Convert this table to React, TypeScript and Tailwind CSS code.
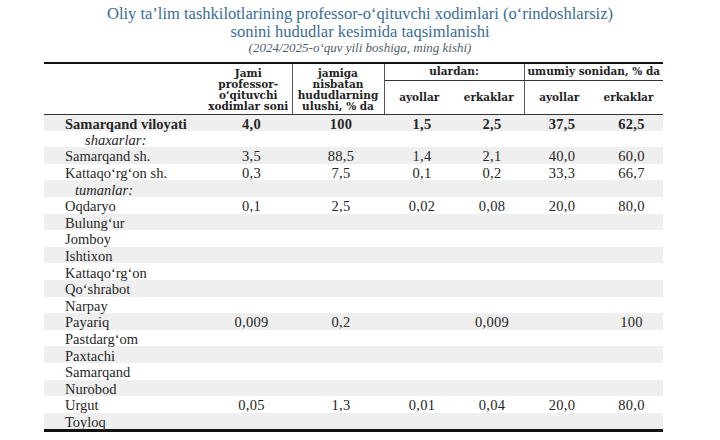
import React from "react";

type Row = { label: string; kind: "bold" | "ital1" | "ital2" | "normal"; v: string[] };

const rows: Row[] = [
  { label: "Samarqand viloyati", kind: "bold", v: ["4,0", "100", "1,5", "2,5", "37,5", "62,5"] },
  { label: "shaxarlar:", kind: "ital1", v: ["", "", "", "", "", ""] },
  { label: "Samarqand sh.", kind: "normal", v: ["3,5", "88,5", "1,4", "2,1", "40,0", "60,0"] },
  { label: "Kattaqo‘rg‘on sh.", kind: "normal", v: ["0,3", "7,5", "0,1", "0,2", "33,3", "66,7"] },
  { label: "tumanlar:", kind: "ital2", v: ["", "", "", "", "", ""] },
  { label: "Oqdaryo", kind: "normal", v: ["0,1", "2,5", "0,02", "0,08", "20,0", "80,0"] },
  { label: "Bulung‘ur", kind: "normal", v: ["", "", "", "", "", ""] },
  { label: "Jomboy", kind: "normal", v: ["", "", "", "", "", ""] },
  { label: "Ishtixon", kind: "normal", v: ["", "", "", "", "", ""] },
  { label: "Kattaqo‘rg‘on", kind: "normal", v: ["", "", "", "", "", ""] },
  { label: "Qo‘shrabot", kind: "normal", v: ["", "", "", "", "", ""] },
  { label: "Narpay", kind: "normal", v: ["", "", "", "", "", ""] },
  { label: "Payariq", kind: "normal", v: ["0,009", "0,2", "", "0,009", "", "100"] },
  { label: "Pastdarg‘om", kind: "normal", v: ["", "", "", "", "", ""] },
  { label: "Paxtachi", kind: "normal", v: ["", "", "", "", "", ""] },
  { label: "Samarqand", kind: "normal", v: ["", "", "", "", "", ""] },
  { label: "Nurobod", kind: "normal", v: ["", "", "", "", "", ""] },
  { label: "Urgut", kind: "normal", v: ["0,05", "1,3", "0,01", "0,04", "20,0", "80,0"] },
  { label: "Toyloq", kind: "normal", v: ["", "", "", "", "", ""] },
];

const hdr = "font-['DejaVu_Serif',serif] font-bold text-[10.5px] leading-[11px] text-[#222] text-center align-middle";

export default function App() {
  return (
    <div className="w-[720px] h-[440px] bg-white overflow-hidden font-['Liberation_Serif',serif]">
      <div className="pt-[5px] text-center">
        <div className="text-[16.5px] leading-[18px] text-[#3a6c96]">
          Oliy ta’lim tashkilotlarining professor-o‘qituvchi xodimlari (o‘rindoshlarsiz)
        </div>
        <div className="text-[16.5px] leading-[18px] text-[#3a6c96]">
          sonini hududlar kesimida taqsimlanishi
        </div>
        <div className="text-[13px] leading-[14px] italic text-[#4f5d6b]">
          (2024/2025-o‘quv yili boshiga, ming kishi)
        </div>
      </div>
      <div className="pl-[44px] pt-[7px]">
        <table className="w-[619px] table-fixed border-collapse">
          <colgroup>
            <col className="w-[161px]" />
            <col className="w-[87px]" />
            <col className="w-[92px]" />
            <col className="w-[70px]" />
            <col className="w-[70px]" />
            <col className="w-[70px]" />
            <col className="w-[69px]" />
          </colgroup>
          <thead>
            <tr className="border-t-2 border-t-[#111]">
              <th rowSpan={2} className="border-b border-b-[#333]"></th>
              <th rowSpan={2} className={`${hdr} pt-[2px] border-b border-b-[#333]`}>
                Jami<br />professor-<br />o‘qituvchi<br />xodimlar soni
              </th>
              <th rowSpan={2} className={`${hdr} pt-[2px] border-x border-x-[#555] border-b border-b-[#333]`}>
                jamiga<br />nisbatan<br />hududlarning<br />ulushi, % da
              </th>
              <th colSpan={2} className={`${hdr} h-[17px] border-r border-r-[#555] border-b border-b-[#333]`}>
                ulardan:
              </th>
              <th colSpan={2} className={`${hdr} h-[17px] border-b border-b-[#333] whitespace-nowrap`}>
                umumiy sonidan, % da
              </th>
            </tr>
            <tr className="h-[34px]">
              <th className={`${hdr} border-b border-b-[#333]`}>ayollar</th>
              <th className={`${hdr} border-r border-r-[#555] border-b border-b-[#333]`}>erkaklar</th>
              <th className={`${hdr} border-b border-b-[#333]`}>ayollar</th>
              <th className={`${hdr} border-b border-b-[#333]`}>erkaklar</th>
            </tr>
          </thead>
          <tbody className="border-b-[3px] border-b-[#111]">
            {rows.map((r, i) => {
              const bg = i % 2 === 0 ? "bg-[#efefef]" : "bg-white";
              const bold = r.kind === "bold";
              const labelCls =
                r.kind === "bold"
                  ? "pl-[21px] font-bold"
                  : r.kind === "ital1"
                  ? "pl-[41px] italic"
                  : r.kind === "ital2"
                  ? "pl-[31px] italic"
                  : "pl-[21px]";
              return (
                <tr key={i} className={`${bg} h-[16.6px]`}>
                  <td className={`${labelCls} text-[14.5px] leading-[14px] pt-[2px] pb-0 pr-0 text-[#262626] whitespace-nowrap align-middle`}>
                    {r.label}
                  </td>
                  {r.v.map((v, j) => (
                    <td
                      key={j}
                      className={`text-center text-[14.5px] leading-[14px] tracking-[0.3px] text-[#262626] pt-[2px] pb-0 pr-0 pl-[6px] align-middle ${bold ? "font-bold" : ""}`}
                    >
                      {v}
                    </td>
                  ))}
                </tr>
              );
            })}
          </tbody>
        </table>
      </div>
    </div>
  );
}
